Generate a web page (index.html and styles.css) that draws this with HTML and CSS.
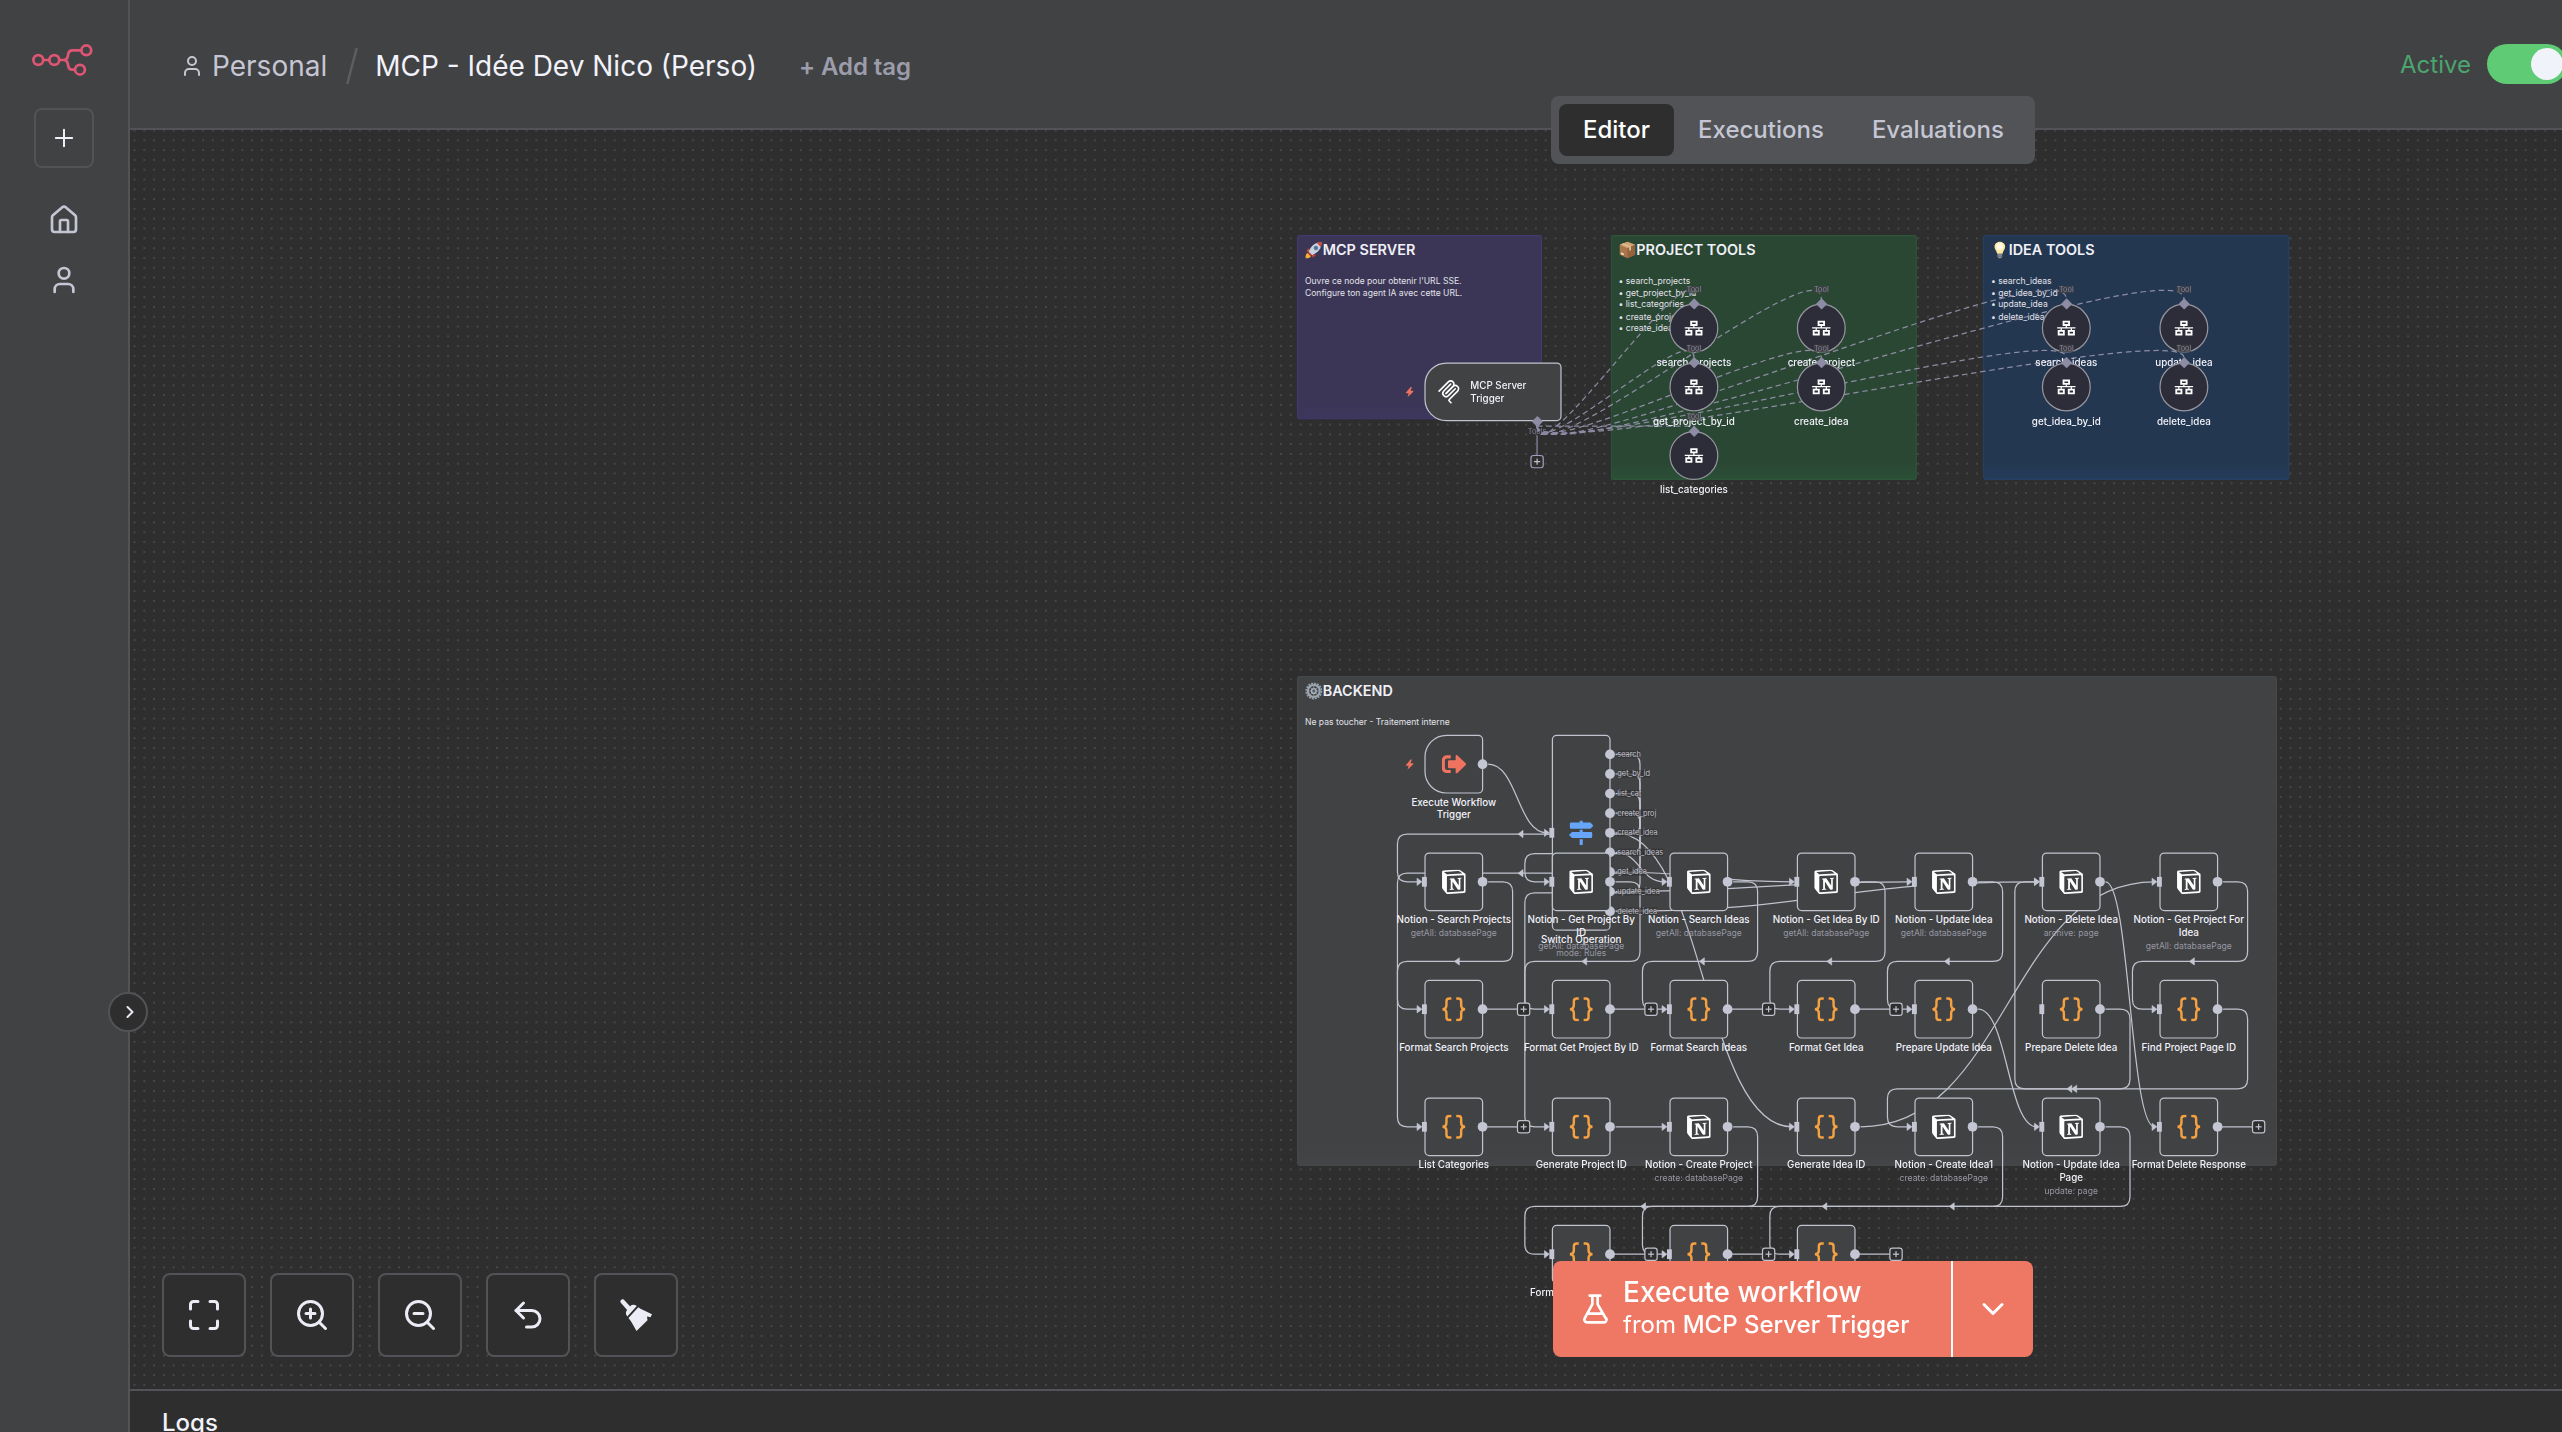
FILE: index.html
```html
<!DOCTYPE html>
<html lang="en">
<head>
<meta charset="utf-8">
<title>MCP - Idée Dev Nico (Perso)</title>
<link rel="stylesheet" href="styles.css">
</head>
<body>
<svg class="sprite" aria-hidden="true">
  <symbol id="i-user" viewBox="0 0 24 24"><path d="M19 21v-2a4 4 0 0 0-4-4H9a4 4 0 0 0-4 4v2"/><circle cx="12" cy="7" r="4"/></symbol>
  <symbol id="i-notion" viewBox="0 0 24 24"><path d="M4.459 4.208c.746.606 1.026.56 2.428.466l13.215-.793c.28 0 .047-.28-.046-.326L17.86 1.968c-.42-.326-.981-.7-2.055-.607L3.01 2.295c-.466.046-.56.28-.374.466zm.793 3.08v13.904c0 .747.373 1.027 1.214.98l14.523-.84c.841-.046.935-.56.935-1.167V6.354c0-.606-.233-.933-.748-.887l-15.177.887c-.56.047-.747.327-.747.933zm14.337.745c.093.42 0 .84-.42.888l-.7.14v10.264c-.608.327-1.168.514-1.635.514-.748 0-.935-.234-1.495-.933l-4.577-7.186v6.952L12.21 19s0 .84-1.168.84l-3.222.186c-.093-.186 0-.653.327-.746l.84-.233V9.854L7.822 9.76c-.094-.42.14-1.026.793-1.073l3.456-.233 4.764 7.279v-6.44l-1.215-.139c-.093-.514.28-.887.747-.933zM1.936 1.035l13.31-.98c1.634-.14 2.055-.047 3.082.7l4.249 2.986c.7.513.934.653.934 1.213v16.378c0 1.026-.373 1.634-1.68 1.726l-15.458.934c-.98.047-1.448-.093-1.962-.747l-3.129-4.06c-.56-.747-.793-1.306-.793-1.96V2.667c0-.839.374-1.54 1.447-1.632z"/></symbol>
  <symbol id="i-code" viewBox="0 0 40 40"><g fill="none" stroke="currentColor" stroke-width="4"><path d="M16 2.5h-3.500a4.500 4.500 0 0 0-4.500 4.500v6c0 4-2.500 7-6.500 7 4 0 6.500 3 6.500 7v6a4.500 4.500 0 0 0 4.500 4.500H16"/><path d="M24 2.500h3.500a4.500 4.500 0 0 1 4.500 4.500v6c0 4 2.500 7 6.500 7-4 0-6.500 3-6.500 7v6a4.500 4.500 0 0 1-4.500 4.500H24"/></g></symbol>
  <symbol id="i-switch" viewBox="0 0 40 40"><path d="M17.500 0h5v3H35l5 5.500-5 5H3.500a2 2 0 0 1-2-2V5a2 2 0 0 1 2-2h14zM17.500 15h5v3.500H36a2 2 0 0 1 2 2v6a2 2 0 0 1-2 2H5L0 23.500l5-5h12.500zM17.500 30.500h5V40h-5z"/></symbol>
  <symbol id="i-signout" viewBox="0 0 40 40"><path d="M15 5.500v5H9a3.500 3.500 0 0 0-3.500 3.500v12A3.500 3.500 0 0 0 9 29.500h6v5H8.500A8 8 0 0 1 .500 26.500v-13a8 8 0 0 1 8-8z"/><path d="M12.500 13.500H23V7c0-2 1.500-2.500 3-1.300L39.500 18.500q1.500 1.500 0 3L26 34.300c-1.500 1.200-3 .7-3-1.300v-6.500H12.500a2 2 0 0 1-2-2v-9a2 2 0 0 1 2-2z"/></symbol>
  <symbol id="i-mcp" viewBox="0 0 180 180"><g fill="none" stroke="currentColor" stroke-width="12" stroke-linecap="round"><path d="M18 84.853 85.882 16.971c9.373-9.373 24.569-9.373 33.941 0 9.373 9.372 9.373 24.568 0 33.941L68.558 102.177"/><path d="m69.265 101.470 50.558-50.558c9.373-9.373 24.569-9.373 33.942 0l.353.353c9.373 9.373 9.373 24.569 0 33.941L92.725 146.600c-3.124 3.124-3.124 8.189 0 11.313l12.606 12.607"/><path d="M102.853 33.941 52.648 84.146c-9.372 9.372-9.372 24.568 0 33.941 9.373 9.372 24.569 9.372 33.941 0l50.205-50.205"/></g></symbol>
  <symbol id="i-tool" viewBox="0 0 32 32"><g fill="none" stroke="currentColor" stroke-width="3"><path d="M11.500 5.500h9v5.500h-9zM3.500 20.500h8.500v6H3.500zM20 20.500h8.500v6H20z"/><path stroke-width="2" d="M1 15.700h30M16 12v4M7.700 16v4M24.200 16v4"/></g></symbol>
  <symbol id="i-bolt" viewBox="0 0 14 17"><path d="M8.500.3 1 9.200c-.5.700-.2 1.300.6 1.300h3.600l-1.700 6.200c1.500-.8 8.500-7.800 9.300-9.100.4-.7 0-1.200-.7-1.200H8.300L10.500.6C10.300 0 9-.2 8.500.300z"/></symbol>
  <symbol id="e-rocket" viewBox="0 0 30 30"><path d="M5 20c-4 1-4 6-4 9 3 0 8 0 9-4z" fill="#f6b02e"/><path d="M7 11 2 17l5 1zM19 23l-6 5-1-5z" fill="#d8432f"/><path d="M28 2C18 2 11 7 6 18l6 6C23 19 28 12 28 2z" fill="#c9d3df"/><path d="M28 2c-3 0-6 .400-8 1.200L26.800 10C27.600 8 28 5 28 2z" fill="#d8432f"/><path d="m6 18 6 6-3 1-4-4z" fill="#c33a2b"/><circle cx="18.500" cy="11.500" r="3.300" fill="#3b6fa6" stroke="#73808f" stroke-width="1.200"/></symbol>
  <symbol id="e-box" viewBox="0 0 30 30"><path d="M15 1 28 6v17l-13 6L2 23V6z" fill="#a9764a"/><path d="M15 1 28 6l-13 6L2 6z" fill="#d2a373"/><path d="m15 12 13-6v17l-13 6z" fill="#94633b"/><path d="m8 3.500 13 5.500v6l-3 1.500v-6L5 5z" fill="#e0c09a"/><path d="m4 19 5 2v3l-5-2z" fill="#e9dccb"/></symbol>
  <symbol id="e-bulb" viewBox="0 0 30 30"><path d="M15 1c-5.500 0-9 4-9 8.500 0 5 4 7 4.500 12h9C20 16.500 24 14.500 24 9.500 24 5 20.500 1 15 1z" fill="#fbe9a0"/><ellipse cx="15" cy="9" rx="5.500" ry="6" fill="#fffbe6"/><path d="M11 21.500h8v5l-2 2.500h-4l-2-2.500z" fill="#8d9197"/><path d="M11 23.500h8M11 26h8" stroke="#5c6066"/></symbol>
  <symbol id="e-gear" viewBox="0 0 30 30"><circle cx="15" cy="15" r="12.800" fill="none" stroke="#98a1a9" stroke-width="3" stroke-dasharray="3.300 1.730"/><circle cx="15" cy="15" r="10" fill="none" stroke="#a0a9b1" stroke-width="3.400"/><circle cx="15" cy="15" r="4" fill="#55606b" stroke="#b3bac1" stroke-width="2.400"/><path d="M15 5v6M15 19v6M5 15h6M19 15h6M8 8l4 4M18 18l4 4M22 8l-4 4M12 18l-4 4" stroke="#8f9aa5" stroke-width="1.600"/></symbol>
</svg>

<div class="app">
  <aside class="sidebar">
    <svg class="logo" width="62" height="32" viewBox="0 0 62 32" fill="none" stroke-width="2.700"><circle cx="6.300" cy="16" r="4.900"/><circle cx="22.300" cy="16" r="4.900"/><circle cx="54.300" cy="6.300" r="4.900"/><circle cx="48" cy="25.700" r="4.900"/><path d="M11.200 16h6.200M27.200 16h4.600c2.300 0 3.600-1.600 4-3.700l.4-2.200c.4-2.200 1.700-3.800 4-3.800h9.200M31.800 16c2.300 0 3.600 1.600 4 3.700l.4 2.200c.4 2.200 1.700 3.800 4 3.800h2.900"/></svg>
    <button class="add" aria-label="Add"><svg width="28" height="28" viewBox="0 0 24 24"><path d="M5 12h14M12 5v14"/></svg></button>
    <svg class="nav" viewBox="0 0 24 24"><path d="M15 21v-8a1 1 0 0 0-1-1h-4a1 1 0 0 0-1 1v8"/><path d="M3 10a2 2 0 0 1 .709-1.528l7-5.999a2 2 0 0 1 2.582 0l7 5.999A2 2 0 0 1 21 10v9a2 2 0 0 1-2 2H5a2 2 0 0 1-2-2z"/></svg>
    <svg class="nav"><use href="#i-user"/></svg>
    <button class="collapse" aria-label="Expand"><svg width="24" height="24" viewBox="0 0 24 24"><path d="m10.500 17 5-5-5-5"/></svg></button>
  </aside>

  <main class="main">
    <header class="header">
      <svg class="owner-icon"><use href="#i-user"/></svg>
      <span class="owner">Personal</span>
      <svg class="slash" width="12" height="36" viewBox="0 0 12 36"><path d="M10.500 1 1.500 35"/></svg>
      <h1 class="title">MCP - Idée Dev Nico (Perso)</h1>
      <span class="add-tag">+ Add tag</span>
      <div class="activation"><span>Active</span><span class="toggle"></span></div>
    </header>
    <nav class="tabs">
      <a class="tab tab-active">Editor</a>
      <a class="tab">Executions</a>
      <a class="tab">Evaluations</a>
    </nav>

    <section class="canvas">
      <svg class="grid"><defs><pattern id="dots" x="-.4" y="-4.400" width="9.800" height="9.800" patternUnits="userSpaceOnUse"><circle cx="4.900" cy="4.900" r=".65"/></pattern></defs><rect width="100%" height="100%" fill="url(#dots)"/></svg>
      <div class="flow" id="flow">
        <article class="sticky sticky-purple">
          <h2><svg><use href="#e-rocket"/></svg>MCP SERVER</h2>
          <p>Ouvre ce node pour obtenir l'URL SSE.<br>Configure ton agent IA avec cette URL.</p>
        </article>
        <article class="sticky sticky-green">
          <h2><svg><use href="#e-box"/></svg>PROJECT TOOLS</h2>
          <p>• search_projects<br>• get_project_by_id<br>• list_categories<br>• create_project<br>• create_idea</p>
        </article>
        <article class="sticky sticky-blue">
          <h2><svg><use href="#e-bulb"/></svg>IDEA TOOLS</h2>
          <p>• search_ideas<br>• get_idea_by_id<br>• update_idea<br>• delete_idea</p>
        </article>
        <article class="sticky sticky-grey">
          <h2><svg><use href="#e-gear"/></svg>BACKEND</h2>
          <p>Ne pas toucher - Traitement interne</p>
        </article>
        <svg class="edges" id="edges"></svg>
      </div>

      <div class="controls">
        <button aria-label="Fit"><svg viewBox="0 0 24 24"><path d="M8 3H5a2 2 0 0 0-2 2v3M21 8V5a2 2 0 0 0-2-2h-3M3 16v3a2 2 0 0 0 2 2h3M16 21h3a2 2 0 0 0 2-2v-3"/></svg></button>
        <button aria-label="Zoom in"><svg viewBox="0 0 24 24"><circle cx="11" cy="11" r="8"/><path d="m21 21-4.350-4.350M11 8v6M8 11h6"/></svg></button>
        <button aria-label="Zoom out"><svg viewBox="0 0 24 24"><circle cx="11" cy="11" r="8"/><path d="m21 21-4.350-4.350M8 11h6"/></svg></button>
        <button aria-label="Undo"><svg viewBox="0 0 24 24"><path d="M9 14 4 9l5-5"/><path d="M4 9h10.500a5.500 5.500 0 0 1 0 11H11"/></svg></button>
        <button aria-label="Tidy up"><svg class="broom" viewBox="0 0 32 32"><path d="M.6 3.400C-.4 1.600 1.800-.600 3.700.5L10 7.200c2.300-1.800 4.300-2 6.800-.2L7.300 17.500c-2-2.300-1.800-4.500-.2-6.600z"/><path d="m18.300 8.300 2.200 1.400 11.500 5.500-1.500 3-3.500-.7.500 3.700L16.500 32c-2-3.500-5-9.500-8-13z"/></svg></button>
      </div>

      <div class="execute">
        <button class="execute-main">
          <svg width="32" height="36" viewBox="0 0 24 27"><path d="M14 3.500v6a2 2 0 0 0 .245.960l5.510 9.500A2 2 0 0 1 18 23.500H6a2 2 0 0 1-1.755-2.960l5.510-10.080A2 2 0 0 0 10 9.500v-6M6.500 17h11M8 3.500h8"/></svg>
          <span class="execute-text"><strong>Execute workflow</strong><span class="execute-from">from <b>MCP Server Trigger</b></span></span>
        </button>
        <button class="execute-more" aria-label="More"><svg width="36" height="36" viewBox="0 0 24 24"><path d="m6 9 6 6 6-6"/></svg></button>
      </div>
    </section>
    <footer class="logs">Logs</footer>
  </main>
</div>
<script src="flow.js"></script>
</body>
</html>
```
FILE: styles.css
```css
* { box-sizing: border-box; }
body { margin: 0; background: #2e2e2e; font-family: Inter, "Liberation Sans", sans-serif; overflow: hidden; }
button { margin: 0; padding: 0; font: inherit; color: inherit; background: none; border: 0; }
svg { display: block; flex: none; }
.sprite { position: absolute; width: 0; height: 0; }

.app { display: flex; width: 2562px; height: 1432px; overflow: hidden; }

/* Sidebar */
.sidebar { position: relative; z-index: 3; flex: none; display: flex; flex-direction: column; align-items: center; width: 130px; padding-top: 44px; background: #414244; border-right: 2px solid #525356; }
.logo { stroke: #df5675; margin-right: 3px; }
.add { display: flex; align-items: center; justify-content: center; width: 60px; height: 60px; margin: 32px 0 36px; border: 2px solid #525356; border-radius: 8px; }
.add svg { stroke: #f0f0f8; stroke-width: 1.7; stroke-linecap: round; }
.nav { width: 32px; height: 32px; margin-bottom: 28px; }
.nav, .owner-icon { fill: none; stroke: #c4c6d3; stroke-width: 2; stroke-linecap: round; stroke-linejoin: round; }
.collapse { position: absolute; left: 108px; top: 992px; display: flex; align-items: center; justify-content: center; width: 40px; height: 40px; padding-left: 1px; border: 2px solid #525356; border-radius: 50%; background: #2e2e2e; }
.collapse svg { fill: none; stroke: #e6e7ef; stroke-width: 2; stroke-linecap: round; stroke-linejoin: round; }

/* Header */
.main { position: relative; display: flex; flex-direction: column; flex: 1; min-width: 0; }
.header { flex: none; display: flex; align-items: center; height: 130px; padding: 4px 0 0 50px; background: #414244; border-bottom: 2px solid #525356; white-space: nowrap; overflow: hidden; }
.owner-icon { width: 24px; height: 24px; margin-right: 8px; }
.owner { font-size: 28px; color: #c4c6d3; }
.slash { margin: 0 17px 0 19px; fill: none; stroke: #5d5e62; stroke-width: 2.500; stroke-linecap: round; }
.title { margin: 0; font-size: 28px; font-weight: 400; color: #f2f2fa; }
.add-tag { margin-left: 42px; font-size: 24px; font-weight: 600; letter-spacing: -.1px; color: #9c9dab; }
.activation { display: flex; align-items: center; gap: 16px; margin: -4px -5px 0 auto; font-size: 24px; color: #4ca56e; }
.toggle { width: 80px; height: 40px; padding: 4px; border-radius: 20px; background: #5fcb74; display: flex; justify-content: flex-end; }
.toggle::after { content: ""; width: 32px; height: 32px; border-radius: 50%; background: #f1f3fa; }

.tabs { position: absolute; z-index: 2; left: 1421px; top: 96px; display: flex; width: 484px; height: 68px; padding: 8px; border-radius: 8px; background: #525356; }
.tab { display: flex; align-items: center; padding: 0 24px 2px; border-radius: 8px; font-size: 24px; font-weight: 500; color: #c4c6d3; }
.tab-active { background: #2e2e2e; color: #fff; }

/* Canvas */
.canvas { position: relative; flex: none; height: 1259px; overflow: hidden; background: #2e2e2e; }
.grid { position: absolute; inset: 0; width: 100%; height: 100%; }
.grid circle { fill: #707175; }
.flow { position: absolute; left: 1166.8px; top: 104.7px; width: 0; height: 0; transform: scale(.6125); transform-origin: 0 0; }
.edges { position: absolute; left: 0; top: 0; width: 1700px; height: 1900px; overflow: visible; fill: none; }
.edge { stroke: #c0c2ce; stroke-width: 2; }
.edge-tool { stroke: #8d8ca4; stroke-width: 2; stroke-dasharray: 9 6; }
.edge-stem { stroke: #6c6b7e; stroke-width: 3; }
.arrow { fill: #c4c6d3; stroke: #c4c6d3; stroke-width: 1; stroke-linejoin: round; }

.sticky { position: absolute; padding: 7px 11px; border: 2px solid; border-radius: 4px; color: #f0f0f8; white-space: nowrap; }
.sticky::after { content: ""; position: absolute; inset: auto 0 0; height: 28px; opacity: .22; background: linear-gradient(transparent, var(--edge)); }
.sticky h2 { display: flex; align-items: center; margin: 0 0 26px; height: 30px; font-size: 23.5px; font-weight: 600; }
.sticky h2 svg { width: 29px; height: 29px; }
.sticky p { margin: 0; font-size: 14px; line-height: 19.200px; color: #e2e2eb; }
.sticky-purple { --edge: #43397c; left: 0; top: 0; width: 400px; height: 301px; background: #3b3655; border-color: #423a70; }
.sticky-green { --edge: #2f6b45; left: 512px; top: 0; width: 500px; height: 400px; background: #2a4733; border-color: #2d5639; }
.sticky-blue { --edge: #254f80; left: 1120px; top: 0; width: 500px; height: 400px; background: #243750; border-color: #254065; }
.sticky-grey { --edge: #4f5053; left: 0; top: 720px; width: 1600px; height: 800px; background: #414244; border-color: #464749; }

.node { position: absolute; display: flex; align-items: center; justify-content: center; width: 96px; height: 96px; border: 2px solid #c0c2ce; border-radius: 8px; background: #414244; color: #fff; }
.node-switch { height: 320px; }
.node-trigger { border-radius: 36px 8px 8px 36px; }
.node-wide { width: 224px; justify-content: flex-start; padding-left: 18px; }
.node-tool { width: 80px; height: 80px; border-color: #96969f; border-radius: 50%; background: #2d2c39; }
.icon { width: 40px; height: 40px; fill: currentColor; }
.node-tool .icon { width: 32px; height: 32px; }
.icon-code { color: #f5a041; }
.icon-switch { color: #66a5f8; }
.icon-signout { color: #f0735f; }
.bolt { position: absolute; left: -33px; width: 14px; height: 17px; fill: #f0735f; }
.label { position: absolute; top: 100%; left: 50%; transform: translateX(-50%); margin-top: 6px; text-align: center; white-space: nowrap; font-size: 16px; line-height: 20px; font-weight: 500; color: #f2f2fa; }
.node-tool .label { margin-top: 8px; }
.sub { margin-top: 3px; font-size: 14px; line-height: 18px; font-weight: 400; color: #9798a3; }
.inline-label { margin-left: 15px; font-size: 16px; line-height: 20px; font-weight: 500; color: #f2f2fa; }
.out { position: absolute; width: 16px; height: 16px; margin: -8px; border-radius: 50%; background: #c4c6d3; }
.in { position: absolute; left: -6px; top: 50%; width: 8px; height: 16px; margin-top: -8px; background: #c4c6d3; }
.out-name { position: absolute; left: 20px; top: 50%; transform: translateY(-50%); font-size: 12px; line-height: 12px; color: #c0c1cc; background: rgba(46, 46, 46, .6); white-space: nowrap; }
.diamond { position: absolute; left: 50%; top: -2px; width: 13px; height: 13px; margin: -6.500px; transform: rotate(45deg); background: #8d8ca4; }
.tool-name { position: absolute; transform: translate(-50%, -50%); font-size: 12px; line-height: 12px; color: #83829a; background: rgba(65, 66, 68, .75); }
.tool-name-plain { background: none; }
.plus { position: absolute; width: 22px; height: 22px; margin: -11px; border: 2px solid #c0c2ce; border-radius: 5px; background: #2e2e2e; }
.plus::before, .plus::after { content: ""; position: absolute; left: 4px; top: 8px; width: 10px; height: 2px; background: #c0c2ce; }
.plus::after { transform: rotate(90deg); }
.plus-tool { border-color: #a09fbb; }

/* Overlays */
.controls { position: absolute; left: 32px; bottom: 32px; display: flex; gap: 24px; }
.controls button { display: flex; align-items: center; justify-content: center; width: 84px; height: 84px; border: 2px solid #525356; border-radius: 8px; background: #2e2e2e; }
.controls svg { width: 36px; height: 36px; fill: none; stroke: #ebecf5; stroke-width: 2; stroke-linecap: round; stroke-linejoin: round; }
.controls .broom { width: 32px; height: 32px; fill: #ebecf5; stroke: none; }
.execute { position: absolute; left: 1423px; bottom: 32px; display: flex; width: 480px; height: 96px; border-radius: 8px; overflow: hidden; background: #ef7865; color: #fff; }
.execute-main { display: flex; align-items: center; gap: 12px; width: 400px; padding-left: 26px; border-right: 2px solid #fff; text-align: left; }
.execute svg { fill: none; stroke: #fff; stroke-width: 2; stroke-linecap: round; stroke-linejoin: round; }
.execute-text { display: flex; flex-direction: column; padding-bottom: 3px; white-space: nowrap; }
.execute-text strong { font-size: 28px; line-height: 34px; font-weight: 500; }
.execute-from { font-size: 24px; line-height: 31px; }
.execute-from b { font-weight: 500; }
.execute-more { flex: 1; display: flex; align-items: center; justify-content: center; }

.logs { flex: 1; padding: 18px 32px 0; border-top: 2px solid #525356; background: #2e2e2e; font-size: 24px; line-height: 28px; font-weight: 500; color: #f2f2fa; overflow: hidden; }
```
FILE: flow.js
```js
const flow = document.getElementById('flow');
const edges = document.getElementById('edges');
const NS = 'http://www.w3.org/2000/svg';

const N = 96;
const DB = 'getAll: databasePage';

// [x, y, kind, label, subtitle, options]
const nodes = [
  [208, 816, 'signout', 'Execute Workflow<br>Trigger', '', { cls: 'node-trigger', bolt: true }],
  [416, 816, 'switch', 'Switch Operation', 'mode: Rules', { cls: 'node-switch', input: true,
    outs: ['search', 'get_by_id', 'list_cat', 'create_proj', 'create_idea', 'search_ideas', 'get_idea', 'update_idea', 'delete_idea'] }],
  [208, 1008, 'notion', 'Notion - Search Projects', DB],
  [416, 1008, 'notion', 'Notion - Get Project By<br>ID', DB],
  [608, 1008, 'notion', 'Notion - Search Ideas', DB],
  [816, 1008, 'notion', 'Notion - Get Idea By ID', DB],
  [1008, 1008, 'notion', 'Notion - Update Idea', DB],
  [1216, 1008, 'notion', 'Notion - Delete Idea', 'archive: page'],
  [1408, 1008, 'notion', 'Notion - Get Project For<br>Idea', DB],
  [208, 1216, 'code', 'Format Search Projects', '', { plus: true }],
  [416, 1216, 'code', 'Format Get Project By ID', '', { plus: true }],
  [608, 1216, 'code', 'Format Search Ideas', '', { plus: true }],
  [816, 1216, 'code', 'Format Get Idea', '', { plus: true }],
  [1008, 1216, 'code', 'Prepare Update Idea'],
  [1216, 1216, 'code', 'Prepare Delete Idea'],
  [1408, 1216, 'code', 'Find Project Page ID'],
  [208, 1408, 'code', 'List Categories', '', { plus: true }],
  [416, 1408, 'code', 'Generate Project ID'],
  [608, 1408, 'notion', 'Notion - Create Project', 'create: databasePage'],
  [816, 1408, 'code', 'Generate Idea ID'],
  [1008, 1408, 'notion', 'Notion - Create Idea1', 'create: databasePage'],
  [1216, 1408, 'notion', 'Notion - Update Idea<br>Page', 'update: page'],
  [1408, 1408, 'code', 'Format Delete Response', '', { plus: true }],
  [416, 1616, 'code', 'Format Create Project', '', { plus: true }],
  [608, 1616, 'code', '', '', { plus: true }],
  [816, 1616, 'code', '', '', { plus: true }],
];

const tools = [
  [608, 112, 'search_projects'], [816, 112, 'create_project'],
  [1216, 112, 'search_ideas'], [1408, 112, 'update_idea'],
  [608, 208, 'get_project_by_id'], [816, 208, 'create_idea'],
  [1216, 208, 'get_idea_by_id'], [1408, 208, 'delete_idea'],
  [608, 320, 'list_categories'],
];

// [source right edge, source y, target left edge, target y]
const links = [
  [304, 864, 416, 976],
  [512, 848, 208, 1056], [512, 880, 416, 1056], [512, 912, 208, 1456], [512, 944, 416, 1456],
  [512, 976, 816, 1456], [512, 1008, 608, 1056], [512, 1040, 816, 1056],
  [512, 1072, 1008, 1056], [512, 1104, 1216, 1056],
  [304, 1056, 208, 1264], [512, 1056, 416, 1264], [704, 1056, 608, 1264], [912, 1056, 816, 1264],
  [1104, 1056, 1008, 1264], [1504, 1056, 1408, 1264],
  [1104, 1264, 1216, 1456], [1312, 1264, 1216, 1056], [1504, 1264, 1008, 1456],
  [1312, 1056, 1408, 1456], [912, 1456, 1408, 1056], [512, 1456, 608, 1456],
  [704, 1456, 416, 1664], [1104, 1456, 608, 1664], [1312, 1456, 816, 1664],
];

function path(cls, d) {
  const p = document.createElementNS(NS, 'path');
  p.setAttribute('class', cls);
  p.setAttribute('d', d);
  edges.appendChild(p);
}

function add(parent, cls, html, x, y) {
  const el = document.createElement('div');
  el.className = cls;
  el.innerHTML = html || '';
  if (x !== undefined) { el.style.left = x + 'px'; el.style.top = y + 'px'; }
  parent.appendChild(el);
  return el;
}

const icon = (name) => `<svg class="icon icon-${name}"><use href="#i-${name}"/></svg>`;

for (const [right, sy, left, ty] of links) {
  const sx = right + 8, tx = left - 8;
  if (left > right) {
    const mx = (sx + tx) / 2;
    path('edge', `M${sx} ${sy}C${mx} ${sy} ${mx} ${ty} ${tx} ${ty}`);
  } else {
    // Backward links leave right, run back below the source and re-enter from the left
    const a = right + 48, b = left - 44, m = sy + 130, r = 16, s = Math.sign(ty - m);
    path('edge', `M${sx} ${sy}H${a - r}Q${a} ${sy} ${a} ${sy + r}V${m - r}Q${a} ${m} ${a - r} ${m}H${b + r}Q${b} ${m} ${b} ${m + s * r}V${ty - s * r}Q${b} ${ty} ${b + r} ${ty}H${tx}`);
    const c = (a + b) / 2 - 1;
    path('arrow', `M${c} ${m}l8 -6v12z`);
  }
  path('arrow', `M${left - 4} ${ty}l-8 -6v12z`);
}

for (const [x, y] of tools) {
  const sx = 392, sy = 312, tx = x + 40, ty = y - 8;
  const o = 6.25 * Math.sqrt(sy - ty);
  path('edge-tool', `M${sx} ${sy}C${sx} ${sy + o} ${tx} ${ty - o} ${tx} ${ty}V${y}`);
}
path('edge-stem', 'M392 327V359');

for (const [x, y, kind, label, sub, o = {}] of nodes) {
  if (o.plus) path('edge', `M${x + N} ${y + 48}h56`);
  const el = add(flow, 'node ' + (o.cls || ''), icon(kind), x, y);
  if (o.bolt) el.insertAdjacentHTML('beforeend', '<svg class="bolt"><use href="#i-bolt"/></svg>');
  else add(el, 'in');
  if (o.outs) o.outs.forEach((n, i) => add(el, 'out', `<span class="out-name">${n}</span>`, 93, 30 + 32 * i));
  else add(el, 'out', '', 93, 46);
  if (label) add(el, 'label', label + (sub ? `<div class="sub">${sub}</div>` : ''));
  if (o.plus) add(flow, 'plus', '', x + 162, y + 48);
}

const mcp = add(flow, 'node node-trigger node-wide', icon('mcp') + '<span class="inline-label">MCP Server<br>Trigger</span><svg class="bolt"><use href="#i-bolt"/></svg>', 208, 208);
add(mcp, 'diamond', '', 182, 94);
add(flow, 'tool-name tool-name-plain', 'Tools', 392, 321);
add(flow, 'plus plus-tool', '', 392, 370);

for (const [x, y, label] of tools) {
  const el = add(flow, 'node node-tool', icon('tool') + '<span class="diamond"></span>', x, y);
  add(el, 'label', label);
}
for (const [x, y] of tools) add(flow, 'tool-name', 'Tool', x + 40, y - 23);
```
